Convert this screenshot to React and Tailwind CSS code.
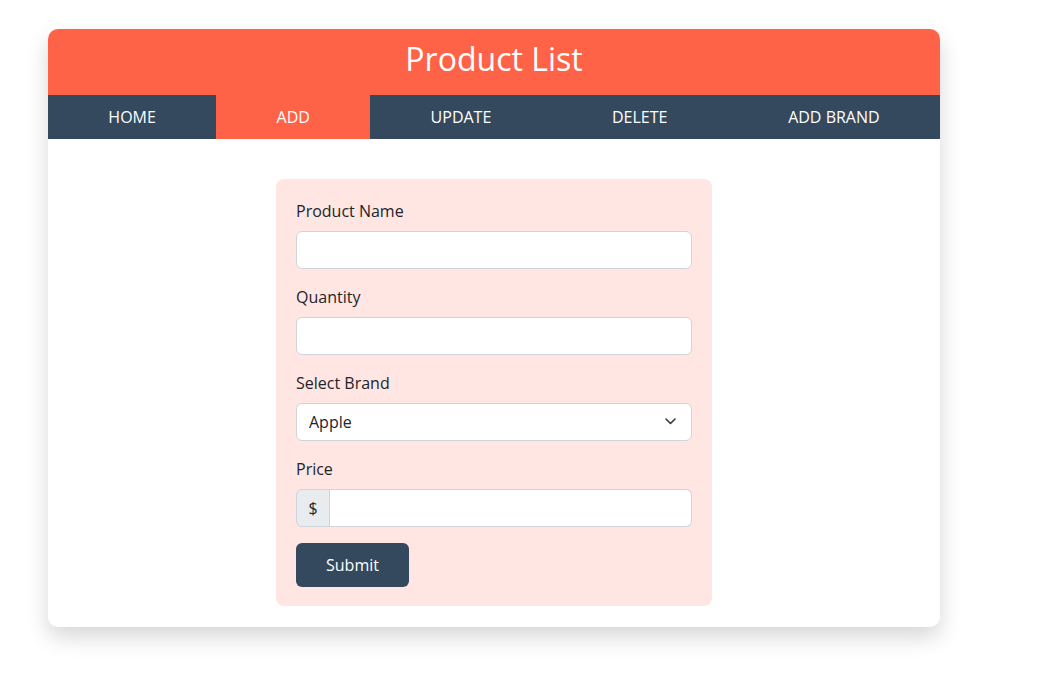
import React, { useState } from "react";

const tabs = ["HOME", "ADD", "UPDATE", "DELETE", "ADD BRAND"];

export default function App() {
  const [active] = useState("ADD");

  return (
    <div className="min-h-screen bg-white pt-[29px] pl-[48px]" style={{ fontFamily: "'Open Sans', sans-serif" }}>
      <div className="w-[892px] rounded-[10px] bg-white shadow-[0_10px_22px_rgba(0,0,0,0.16)]">
        {/* Cabecera */}
        <div className="h-[66px] rounded-t-[10px] bg-[#ff6347] flex items-center justify-center">
          <h1 className="text-[32px] leading-none text-white pb-[6px]">Product List</h1>
        </div>

        {/* Navegación */}
        <nav className="flex h-[44px] bg-[#34495e]">
          {tabs.map((t) => (
            <div
              key={t}
              className={
                "grow flex items-center justify-center text-[16px] text-white " +
                (t === active ? "bg-[#ff6347]" : "")
              }
            >
              {t}
            </div>
          ))}
        </nav>

        {/* Formulario */}
        <div className="pl-[228px] pt-[40px] pb-[21px]">
          <form className="w-[436px] rounded-[8px] bg-[#ffe6e2] p-[20px] text-[#212529]">
            <label className="block text-[16px] leading-[24px] mb-[8px]">Product Name</label>
            <input className="block w-full h-[38px] rounded-[6px] border border-[#ced4da] bg-white px-3 mb-[16px]" />

            <label className="block text-[16px] leading-[24px] mb-[8px]">Quantity</label>
            <input className="block w-full h-[38px] rounded-[6px] border border-[#ced4da] bg-white px-3 mb-[16px]" />

            <label className="block text-[16px] leading-[24px] mb-[8px]">Select Brand</label>
            <div className="relative mb-[16px]">
              <select className="block w-full h-[38px] appearance-none rounded-[6px] border border-[#ced4da] bg-white pl-[12px] text-[16px] text-[#212529]">
                <option>Apple</option>
                <option>Samsung</option>
              </select>
              <svg
                className="pointer-events-none absolute right-[16px] top-[15px]"
                width="11"
                height="7"
                viewBox="0 0 11 7"
                fill="none"
              >
                <path d="M1 1l4.5 4.5L10 1" stroke="#343a40" strokeWidth="1.6" strokeLinecap="round" strokeLinejoin="round" />
              </svg>
            </div>

            <label className="block text-[16px] leading-[24px] mb-[8px]">Price</label>
            <div className="flex h-[38px] mb-[16px]">
              <span className="flex w-[34px] items-center justify-center rounded-l-[6px] border border-[#ced4da] bg-[#e9ecef] text-[16px]">
                $
              </span>
              <input className="block min-w-0 flex-1 rounded-r-[6px] border border-l-0 border-[#ced4da] bg-white px-3" />
            </div>

            <button
              type="button"
              className="block h-[44px] w-[113px] rounded-[6px] bg-[#34495e] text-[16px] text-white mb-[-1px]"
            >
              Submit
            </button>
          </form>
        </div>
      </div>
    </div>
  );
}
